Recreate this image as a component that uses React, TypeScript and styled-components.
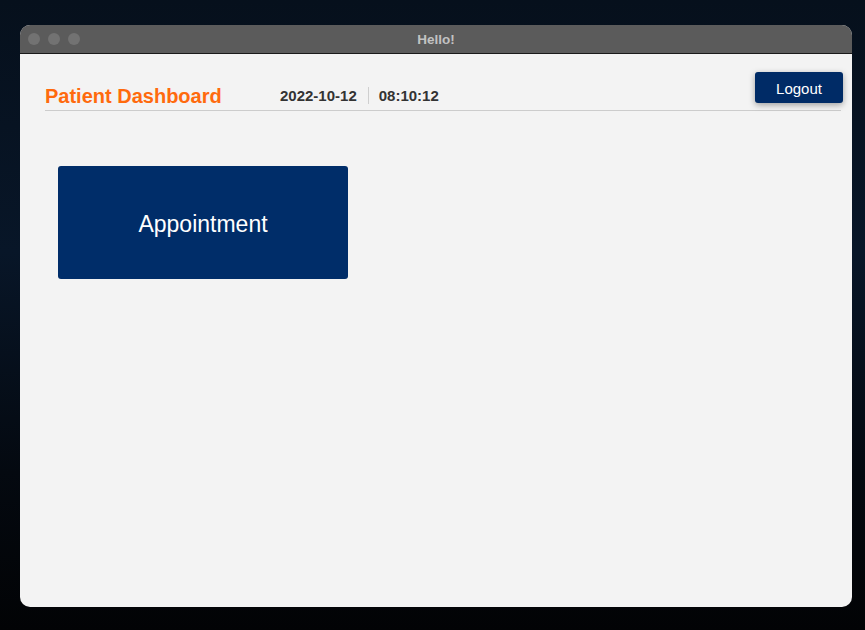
import React from "react";
import styled, { createGlobalStyle } from "styled-components";

const Global = createGlobalStyle`
  html, body { margin: 0; padding: 0; }
  body {
    width: 865px;
    height: 630px;
    overflow: hidden;
    background: linear-gradient(180deg, #06101c 0%, #081628 40%, #040910 75%, #020305 100%);
    font-family: "Liberation Sans", Arial, sans-serif;
  }
`;

const Desktop = styled.div`
  width: 865px;
  height: 630px;
  padding: 25px 13px 23px 20px;
  box-sizing: border-box;
`;

const Window = styled.div`
  width: 832px;
  height: 582px;
  border-radius: 10px;
  overflow: hidden;
  background: #f3f3f3;
  display: flex;
  flex-direction: column;
`;

const TitleBar = styled.div`
  position: relative;
  height: 28px;
  background: #5b5b5b;
  border-bottom: 1px solid #1a1a1a;
  display: flex;
  align-items: center;
  justify-content: center;
  flex-shrink: 0;
`;

const Lights = styled.div`
  position: absolute;
  left: 8px;
  top: 8px;
  display: flex;
  gap: 8px;
`;

const Light = styled.span`
  width: 12px;
  height: 12px;
  border-radius: 50%;
  background: #727272;
`;

const Title = styled.span`
  font-size: 13.5px;
  font-weight: bold;
  color: #c2c2c2;
`;

const Content = styled.div`
  flex: 1;
  padding: 18px 9px 0 25px;
`;

const Header = styled.div`
  display: flex;
  align-items: flex-end;
  border-bottom: 1px solid #cccccc;
  padding-bottom: 6px;
  margin-right: 2px;
`;

const Brand = styled.div`
  flex: 0 0 235px;
  color: #ff6a0d;
  font-size: 20px;
  font-weight: bold;
  line-height: 22px;
  margin-bottom: -3px;
`;

const Stamp = styled.span<{ $sep?: boolean }>`
  font-size: 15px;
  font-weight: bold;
  color: #333333;
  line-height: 17px;
  padding: ${(p) => (p.$sep ? "0 0 0 10px" : "0 11px 0 0")};
  border-left: ${(p) => (p.$sep ? "1px solid #cfcfcf" : "none")};
  margin-bottom: 0;
`;

const Logout = styled.button`
  margin-left: auto;
  margin-right: -2px;
  margin-bottom: 1px;
  width: 88px;
  height: 31px;
  padding: 2px 0 0;
  border: none;
  border-radius: 3px;
  background: #002b66;
  color: #ffffff;
  font-family: "Liberation Sans", Arial, sans-serif;
  font-size: 15px;
  box-shadow: 0 2px 6px rgba(0, 0, 0, 0.35);
  cursor: pointer;
`;

const Tiles = styled.div`
  display: flex;
  padding: 55px 0 0 13px;
`;

const Tile = styled.div`
  width: 290px;
  height: 113px;
  border-radius: 3px;
  background: #002d69;
  color: #ffffff;
  font-size: 23px;
  padding-top: 3px;
  box-sizing: border-box;
  display: flex;
  align-items: center;
  justify-content: center;
`;

export default function App() {
  return (
    <>
      <Global />
      <Desktop>
        <Window>
          <TitleBar>
            <Lights>
              <Light />
              <Light />
              <Light />
            </Lights>
            <Title>Hello!</Title>
          </TitleBar>
          <Content>
            <Header>
              <Brand>Patient Dashboard</Brand>
              <Stamp>2022-10-12</Stamp>
              <Stamp $sep>08:10:12</Stamp>
              <Logout>Logout</Logout>
            </Header>
            <Tiles>
              <Tile>Appointment</Tile>
            </Tiles>
          </Content>
        </Window>
      </Desktop>
    </>
  );
}
